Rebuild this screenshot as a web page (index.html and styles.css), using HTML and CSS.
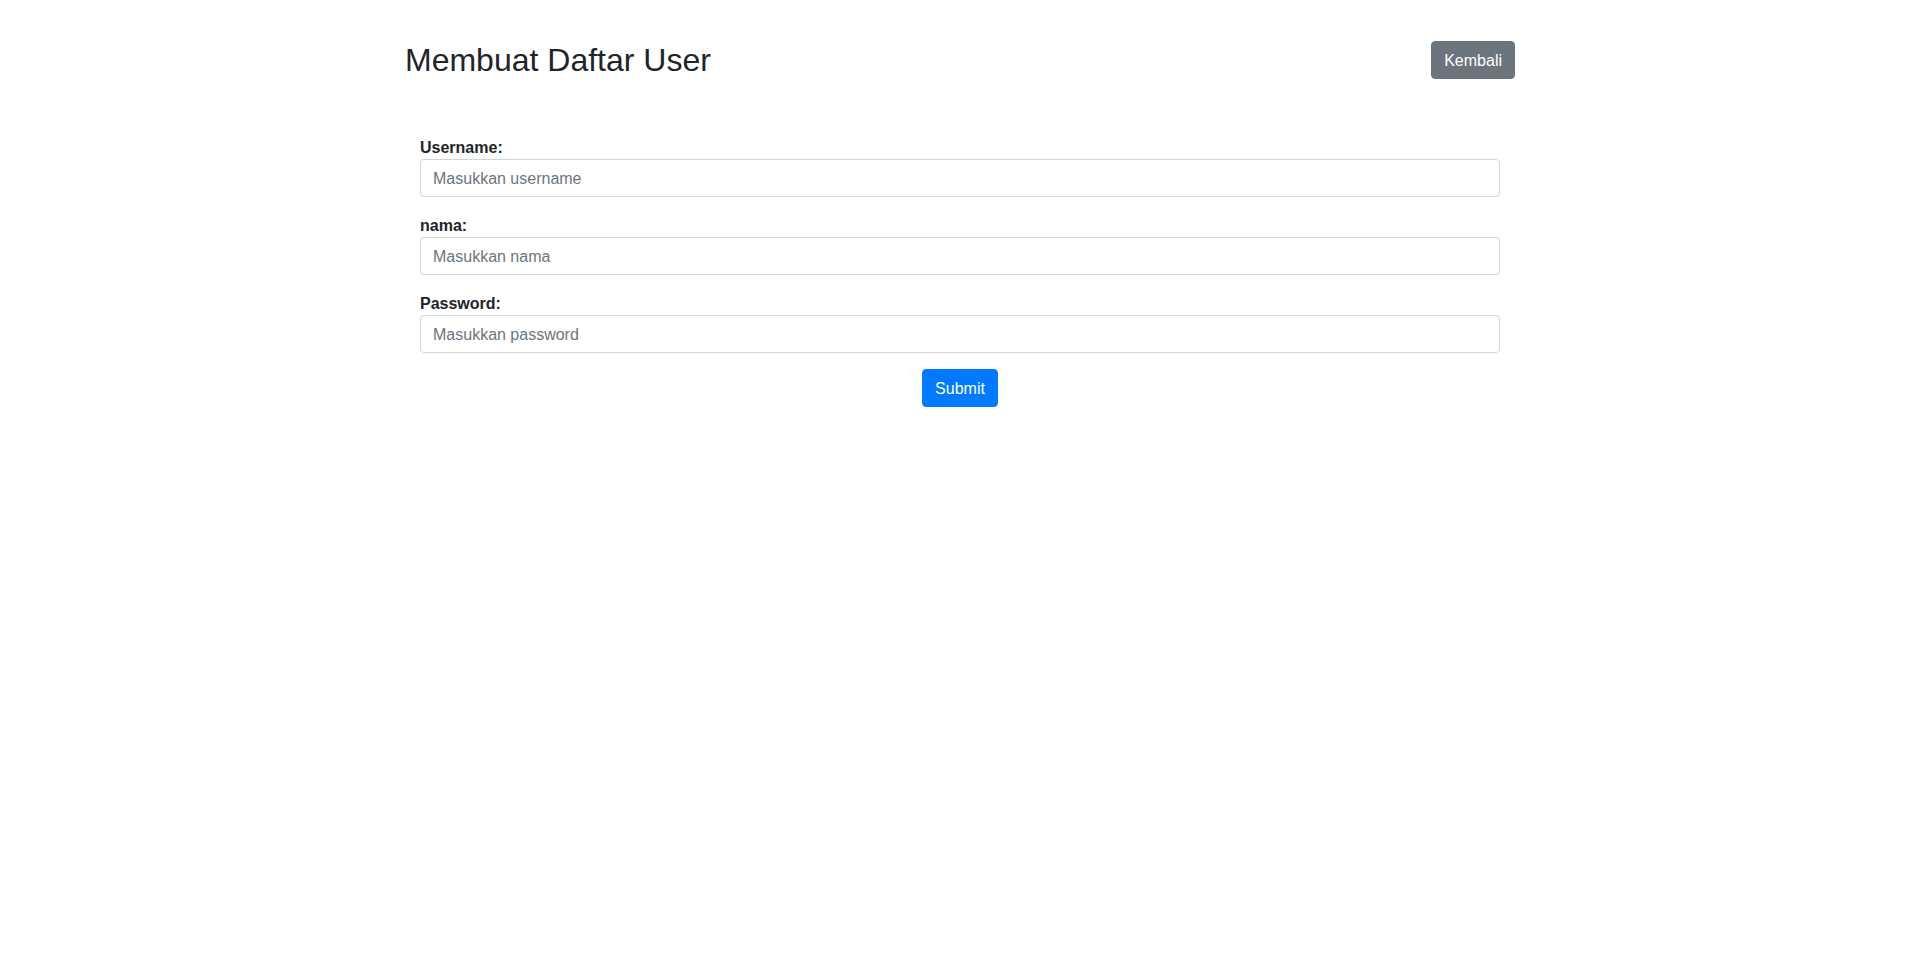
FILE: index.html
```html
<!DOCTYPE html>
<html lang="id">
<head>
<meta charset="utf-8">
<meta name="viewport" content="width=device-width, initial-scale=1">
<title>Membuat Daftar User</title>
<link rel="stylesheet" href="styles.css">
</head>
<body>
<main class="container">
  <header class="page-header">
    <h2 class="page-title">Membuat Daftar User</h2>
    <a class="btn btn-secondary" href="#">Kembali</a>
  </header>
  <form class="user-form">
    <div class="form-group">
      <label class="form-label" for="username">Username:</label>
      <input class="form-control" type="text" id="username" name="username" placeholder="Masukkan username">
    </div>
    <div class="form-group">
      <label class="form-label" for="nama">nama:</label>
      <input class="form-control" type="text" id="nama" name="nama" placeholder="Masukkan nama">
    </div>
    <div class="form-group">
      <label class="form-label" for="password">Password:</label>
      <input class="form-control" type="password" id="password" name="password" placeholder="Masukkan password">
    </div>
    <div class="form-actions">
      <button class="btn btn-primary" type="submit">Submit</button>
    </div>
  </form>
</main>
</body>
</html>
```
FILE: styles.css
```css
*,
*::before,
*::after {
  box-sizing: border-box;
}

body {
  margin: 0;
  background: #fff;
  color: #212529;
  font-family: "Liberation Sans", Arial, sans-serif;
  font-size: 16px;
  line-height: 23px;
}

.container {
  max-width: 1140px;
  margin: 0 auto;
  padding: 41px 15px;
}

.page-header {
  display: flex;
  align-items: center;
  justify-content: space-between;
  margin-bottom: 56px;
}

.page-title {
  margin: 0;
  font-size: 32px;
  font-weight: 500;
  line-height: 38px;
}

.user-form {
  padding: 0 15px;
}

.form-group {
  margin-bottom: 16px;
}

.form-label {
  display: block;
  padding-top: 1px;
  font-weight: 700;
}

.form-control {
  display: block;
  width: 100%;
  padding: 7px 12px 6px;
  border: 1px solid #ced4da;
  border-radius: 4px;
  background: #fff;
  color: #495057;
  font: inherit;
}

.form-control::placeholder {
  color: #6c757d;
  opacity: 1;
}

.form-actions {
  display: flex;
  justify-content: center;
}

.btn {
  padding: 7px 12px 6px;
  border: 1px solid transparent;
  border-radius: 4px;
  color: #fff;
  font: inherit;
  text-decoration: none;
  cursor: pointer;
}

.btn-primary {
  border-color: #007bff;
  background: #007bff;
}

.btn-secondary {
  border-color: #6c757d;
  background: #6c757d;
}
```
